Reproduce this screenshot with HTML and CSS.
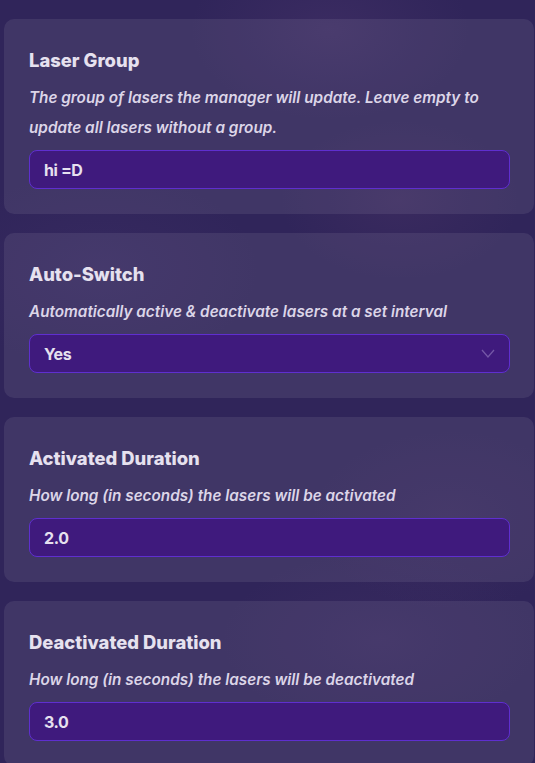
FILE: index.html
```html
<!DOCTYPE html>
<html>
<head>
<meta charset="utf-8">
<link rel="stylesheet" href="styles.css">
</head>
<body>
<div class="page">
  <section class="card">
    <h2 class="title">Laser Group</h2>
    <p class="desc">The group of lasers the manager will update. Leave empty to update all lasers without a group.</p>
    <div class="field">hi =D</div>
  </section>
  <section class="card">
    <h2 class="title">Auto-Switch</h2>
    <p class="desc">Automatically active &amp; deactivate lasers at a set interval</p>
    <div class="field select">
      <span>Yes</span>
      <svg class="chev" width="14" height="9" viewBox="0 0 14 9"><path d="M1 1 L7 8 L13 1" fill="none" stroke="#7457a6" stroke-width="1.3"/></svg>
    </div>
  </section>
  <section class="card">
    <h2 class="title">Activated Duration</h2>
    <p class="desc">How long (in seconds) the lasers will be activated</p>
    <div class="field">2.0</div>
  </section>
  <section class="card">
    <h2 class="title">Deactivated Duration</h2>
    <p class="desc">How long (in seconds) the lasers will be deactivated</p>
    <div class="field">3.0</div>
  </section>
</div>
</body>
</html>
```
FILE: styles.css
```css
html, body {
  margin: 0;
  padding: 0;
}
body {
  width: 535px;
  height: 763px;
  overflow: hidden;
  background-color: #30255a;
  background-image:
    radial-gradient(ellipse 140px 90px at 330px 30px, rgba(120, 80, 140, 0.15), transparent),
    radial-gradient(ellipse 120px 80px at 400px 200px, rgba(130, 80, 130, 0.12), transparent),
    radial-gradient(ellipse 160px 100px at 100px 270px, rgba(110, 80, 150, 0.1), transparent),
    radial-gradient(ellipse 140px 90px at 450px 520px, rgba(120, 80, 130, 0.1), transparent),
    radial-gradient(ellipse 160px 90px at 380px 640px, rgba(120, 80, 140, 0.1), transparent);
  font-family: Inter, "Noto Sans", sans-serif;
  color: #e6e1ef;
}
.page {
  display: flex;
  flex-direction: column;
  gap: 19px;
  padding: 19px 1px 0 4px;
}
.card {
  background: rgba(255, 255, 255, 0.08);
  border-radius: 10px;
  padding: 25px 24px 25px 25px;
}
.title {
  margin: 0;
  font-size: 18.4px;
  line-height: 32px;
  font-weight: 800;
  letter-spacing: 0;
  color: #e6e1ef;
}
.desc {
  margin: 7px 0 7px 0;
  font-size: 15.3px;
  line-height: 30px;
  font-style: italic;
  font-weight: 600;
  letter-spacing: 0;
  color: #dcd5e8;
}
.field {
  box-sizing: border-box;
  height: 39px;
  border: 1px solid #5f2fcf;
  border-radius: 8px;
  background: #3f1a7d;
  padding: 0 14px;
  display: flex;
  align-items: center;
  font-size: 16px;
  font-weight: 700;
  letter-spacing: -0.4px;
  color: #e6e1ef;
}
.select {
  justify-content: space-between;
}
.chev {
  display: block;
}
```
